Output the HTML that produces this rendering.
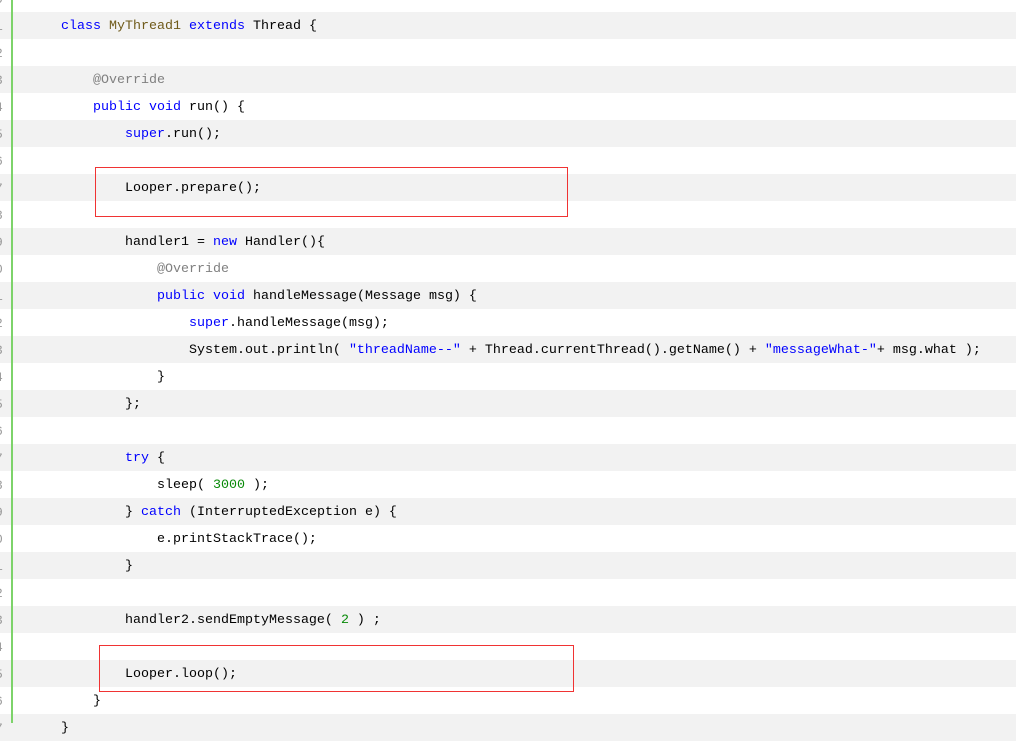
<!DOCTYPE html>
<html><head><meta charset="utf-8"><style>
html,body{margin:0;padding:0;width:1016px;height:723px;overflow:hidden;background:#fff}
.wrap{position:absolute;left:0;top:-15px;width:1016px}
.l{height:27px;line-height:29px;font-family:"Liberation Mono",monospace;font-size:13.33px;color:#000;white-space:pre;position:relative}
.l:nth-child(even){background:#f2f2f2}
.l .c{position:absolute;left:29px;top:0}
.l .n{position:absolute;left:-5px;color:#999;font-size:13px}
.k{color:#0000ff}.s{color:#0000ff}.a{color:#808080}.t{color:#6f5a1a}.g{color:#098a09}
.bar{position:absolute;left:11px;top:0;width:2px;height:723px;background:#7dd36a}
.box{position:absolute;border:1px solid #f03333}
</style></head><body>
<div class="wrap">
<div class="l"><span class="n">0</span></div>
<div class="l"><span class="n">1</span><span class="c">    <span class="k">class</span> <span class="t">MyThread1</span> <span class="k">extends</span> Thread {</span></div>
<div class="l"><span class="n">2</span></div>
<div class="l"><span class="n">3</span><span class="c">        <span class="a">@Override</span></span></div>
<div class="l"><span class="n">4</span><span class="c">        <span class="k">public</span> <span class="k">void</span> run() {</span></div>
<div class="l"><span class="n">5</span><span class="c">            <span class="k">super</span>.run();</span></div>
<div class="l"><span class="n">6</span></div>
<div class="l"><span class="n">7</span><span class="c">            Looper.prepare();</span></div>
<div class="l"><span class="n">8</span></div>
<div class="l"><span class="n">9</span><span class="c">            handler1 = <span class="k">new</span> Handler(){</span></div>
<div class="l"><span class="n">0</span><span class="c">                <span class="a">@Override</span></span></div>
<div class="l"><span class="n">1</span><span class="c">                <span class="k">public</span> <span class="k">void</span> handleMessage(Message msg) {</span></div>
<div class="l"><span class="n">2</span><span class="c">                    <span class="k">super</span>.handleMessage(msg);</span></div>
<div class="l"><span class="n">3</span><span class="c">                    System.out.println( <span class="s">"threadName--"</span> + Thread.currentThread().getName() + <span class="s">"messageWhat-"</span>+ msg.what );</span></div>
<div class="l"><span class="n">4</span><span class="c">                }</span></div>
<div class="l"><span class="n">5</span><span class="c">            };</span></div>
<div class="l"><span class="n">6</span></div>
<div class="l"><span class="n">7</span><span class="c">            <span class="k">try</span> {</span></div>
<div class="l"><span class="n">8</span><span class="c">                sleep( <span class="g">3000</span> );</span></div>
<div class="l"><span class="n">9</span><span class="c">            } <span class="k">catch</span> (InterruptedException e) {</span></div>
<div class="l"><span class="n">0</span><span class="c">                e.printStackTrace();</span></div>
<div class="l"><span class="n">1</span><span class="c">            }</span></div>
<div class="l"><span class="n">2</span></div>
<div class="l"><span class="n">3</span><span class="c">            handler2.sendEmptyMessage( <span class="g">2</span> ) ;</span></div>
<div class="l"><span class="n">4</span></div>
<div class="l"><span class="n">5</span><span class="c">            Looper.loop();</span></div>
<div class="l"><span class="n">6</span><span class="c">        }</span></div>
<div class="l"><span class="n">7</span><span class="c">    }</span></div>
</div>
<div class="bar"></div>
<div class="box" style="left:95px;top:167px;width:471px;height:48px"></div>
<div class="box" style="left:99px;top:645px;width:473px;height:45px"></div>
</body></html>
